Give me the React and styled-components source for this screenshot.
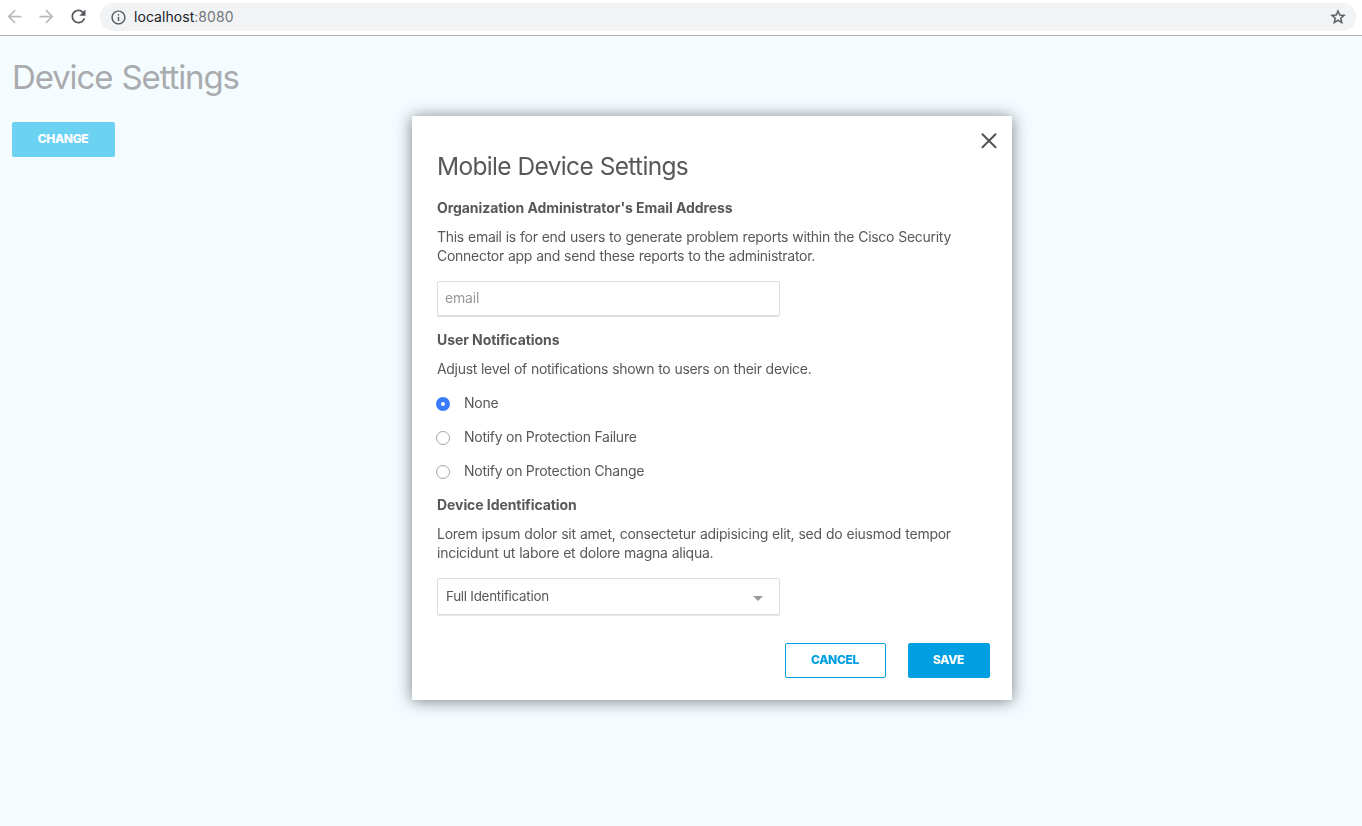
import React, { useState } from 'react';
import styled, { createGlobalStyle } from 'styled-components';
import { MdArrowBack, MdArrowForward, MdRefresh, MdInfoOutline, MdStarBorder } from 'react-icons/md';

const GlobalStyle = createGlobalStyle`
  *, *::before, *::after { box-sizing: border-box; }
  body {
    margin: 0;
    font-family: Inter, "Liberation Sans", sans-serif;
    font-size: 14px;
    color: #58585b;
    overflow: hidden;
  }
  h1, h2, h3, p { margin: 0; font-weight: 400; }
`;

const Screen = styled.div`
  display: flex;
  flex-direction: column;
  height: 100vh;
  background: #f4fcff;
`;

const BrowserBar = styled.header`
  display: flex;
  align-items: flex-start;
  height: 36px;
  padding: 3px 6px 0 0;
  background: #fff;
  border-bottom: 1px solid #b2b4b6;
`;

const NavButtons = styled.div`
  display: flex;
  align-items: center;
  gap: 11px;
  width: 100px;
  height: 28px;
  padding: 0 0 1px 3.5px;
`;

const NavIcon = styled.span`
  display: flex;
  font-size: 21px;
  color: ${(p) => (p.$disabled ? '#babcbe' : '#55585c')};
`;

const AddressBar = styled.div`
  display: flex;
  flex: 1;
  align-items: center;
  height: 28px;
  padding: 0 9px 0 9.5px;
  border-radius: 14px;
  background: #f1f3f4;
  color: #55595e;
  font-size: 17px;
`;

const StarIcon = styled(MdStarBorder)`
  font-size: 18px;
  path:last-child {
    stroke: currentColor;
    stroke-width: 0.4px;
  }
`;

const Url = styled.span`
  flex: 1;
  margin-left: 7.5px;
  padding-bottom: 1px;
  font-size: 14px;
  letter-spacing: 0.05px;
  color: #202124;
`;

const Port = styled.span`
  color: #73777c;
`;

const Page = styled.main`
  display: flex;
  flex-direction: column;
  align-items: flex-start;
  padding: 21px 12px;
`;

const PageTitle = styled.h1`
  font-size: 33px;
  line-height: 40px;
  letter-spacing: -1.12px;
  word-spacing: 1px;
  color: #a9abae;
`;

const Button = styled.button`
  height: 35px;
  width: ${(p) => p.$width}px;
  padding: 0 1px 2px 0;
  border: 1px solid ${(p) => (p.$faded ? '#6bd2f2' : '#009fe1')};
  border-radius: 2px;
  background: ${(p) => (p.$outline ? '#fff' : p.$faded ? '#6bd2f2' : '#009fe1')};
  color: ${(p) => (p.$outline ? '#009fe1' : '#fff')};
  font: 800 12px Inter, "Liberation Sans", sans-serif;
  letter-spacing: -0.33px;
`;

const ChangeButton = styled(Button)`
  margin-top: 25px;
`;

const Modal = styled.section`
  position: fixed;
  top: 116px;
  left: 412px;
  display: flex;
  flex-direction: column;
  width: 600px;
  height: 584px;
  padding: 35px 22px 22px 25px;
  background: #fff;
  box-shadow: 0 1px 15px rgba(0, 0, 0, 0.5);
`;

const CloseButton = styled.button`
  position: absolute;
  top: 17px;
  right: 15px;
  display: flex;
  padding: 0;
  border: 0;
  background: none;
  color: #515356;
`;

const ModalTitle = styled.h2`
  font-size: 24.5px;
  font-weight: 400;
  line-height: 30px;
  letter-spacing: -0.68px;
  word-spacing: 0.5px;
`;

const SectionTitle = styled.h3`
  margin: ${(p) => p.$top}px 0 1px;
  font-size: 14px;
  font-weight: 700;
  line-height: 19px;
  letter-spacing: -0.07px;
`;

const Description = styled.p`
  margin: 9px 0 1px;
  line-height: 19px;
  letter-spacing: ${(p) => p.$tracking || -0.28}px;
  word-spacing: 0.4px;
`;

const EmailInput = styled.input`
  width: 343px;
  height: 35px;
  margin: 15px 0 1px;
  padding: 0 7px 2px;
  border: 1px solid #dcdddf;
  border-radius: 2px;
  box-shadow: 0 1px 0 #dfe0e1;
  font: 14px Inter, "Liberation Sans", sans-serif;
  letter-spacing: -0.2px;
  &::placeholder { color: #97989b; opacity: 1; }
`;

const RadioGroup = styled.div`
  display: flex;
  flex-direction: column;
  margin: 6px 0 1px;
`;

const RadioRow = styled.label`
  display: flex;
  align-items: center;
  gap: 14px;
  height: 34px;
  margin-left: -1px;
  letter-spacing: -0.27px;
`;

const Radio = styled.input`
  appearance: none;
  width: 14px;
  height: 14px;
  margin: 3px 0 0;
  border: 1px solid #a6a6a6;
  border-radius: 50%;
  background: #fff;
  &:checked {
    border: 5px solid #397bfb;
  }
`;

const Select = styled.div`
  display: flex;
  align-items: center;
  justify-content: space-between;
  width: 343px;
  height: 37px;
  margin-top: 15px;
  padding: 0 16px 1px 8px;
  border: 1px solid #dcdddf;
  border-radius: 2px;
  box-shadow: 0 1px 0 #e6e7e8;
  font-size: 13.4px;
  letter-spacing: -0.26px;
`;

const Caret = styled.span`
  margin-top: 5px;
  border: 5px solid transparent;
  border-top-color: #98999b;
  border-bottom: 0;
`;

const Actions = styled.footer`
  display: flex;
  justify-content: flex-end;
  gap: 22px;
  margin-top: 28px;
`;

const LEVELS = ['None', 'Notify on Protection Failure', 'Notify on Protection Change'];

export default function App() {
  const [level, setLevel] = useState('None');
  return (
    <Screen>
      <GlobalStyle />
      <BrowserBar>
        <NavButtons>
          <NavIcon $disabled><MdArrowBack /></NavIcon>
          <NavIcon $disabled><MdArrowForward /></NavIcon>
          <NavIcon><MdRefresh /></NavIcon>
        </NavButtons>
        <AddressBar>
          <MdInfoOutline />
          <Url>localhost<Port>:8080</Port></Url>
          <StarIcon />
        </AddressBar>
      </BrowserBar>
      <Page>
        <PageTitle>Device Settings</PageTitle>
        <ChangeButton $width={103} $faded>CHANGE</ChangeButton>
      </Page>
      <Modal>
        <CloseButton aria-label="Close">
          <svg width="16" height="16" viewBox="0 0 16 16" fill="none" stroke="currentColor" strokeWidth="2" strokeLinecap="round">
            <path d="M1.5 1.2 14.5 14.2M14.5 1.2 1.5 14.2" />
          </svg>
        </CloseButton>
        <ModalTitle>Mobile Device Settings</ModalTitle>
        <SectionTitle $top={17}>Organization Administrator's Email Address</SectionTitle>
        <Description>
          This email is for end users to generate problem reports within the Cisco Security
          <br />
          Connector app and send these reports to the administrator.
        </Description>
        <EmailInput placeholder="email" />
        <SectionTitle $top={13}>User Notifications</SectionTitle>
        <Description $tracking={-0.31}>Adjust level of notifications shown to users on their device.</Description>
        <RadioGroup>
          {LEVELS.map((name) => (
            <RadioRow key={name}>
              <Radio type="radio" name="level" checked={level === name} onChange={() => setLevel(name)} />
              {name}
            </RadioRow>
          ))}
        </RadioGroup>
        <SectionTitle $top={7}>Device Identification</SectionTitle>
        <Description $tracking={-0.25}>
          Lorem ipsum dolor sit amet, consectetur adipisicing elit, sed do eiusmod tempor
          <br />
          incicidunt ut labore et dolore magna aliqua.
        </Description>
        <Select>
          Full Identification
          <Caret />
        </Select>
        <Actions>
          <Button $width={101} $outline>CANCEL</Button>
          <Button $width={82}>SAVE</Button>
        </Actions>
      </Modal>
    </Screen>
  );
}
